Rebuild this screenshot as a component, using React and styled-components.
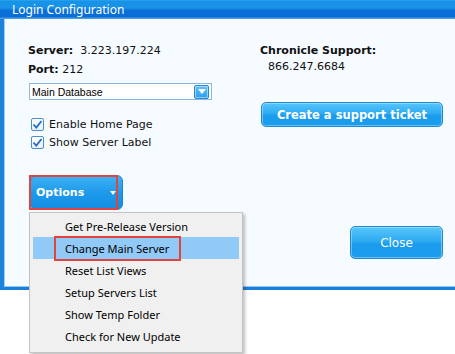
import styled, { createGlobalStyle } from 'styled-components'

const GlobalStyle = createGlobalStyle`
  html, body {
    margin: 0;
    padding: 0;
    height: 100%;
    background: #ffffff;
    overflow: hidden;
  }
  * { box-sizing: border-box; }
`

const Window = styled.div`
  position: relative;
  width: 100%;
  font-family: "DejaVu Sans", Verdana, sans-serif;
  font-size: 11px;
  color: #111;
`
const TitleBar = styled.div`
  height: 19px;
  padding-left: 12px;
  display: flex;
  align-items: center;
  color: #fff;
  font-family: "Noto Sans", "Open Sans", sans-serif;
  font-size: 12px;
  background: linear-gradient(to bottom, #3aa6ec 0px, #1694e7 1px, #1a92e6 8px, #0a70d9 10px, #0a6dd6 17px, #4b9ee6 18px);
`
const Frame = styled.div`
  height: 271px;
  border-left: 4px solid #1c82dc;
  border-bottom: 3px solid #1c7fd8;
  box-shadow: inset 1px 0 0 #9cd0f6, inset 0 -1px 0 #8fc8f3;
  background: #f6fbff;
  display: grid;
  grid-template-columns: 232px 183px;
  padding: 24px 0 28px 24px;
`
const Column = styled.div`
  display: flex;
  flex-direction: column;
`
const Line = styled.div`
  line-height: ${p => p.$lh || 15}px;
  margin-bottom: ${p => p.$mb || 0}px;
  padding-left: ${p => p.$indent || 0}px;
  white-space: nowrap;
`
const Label = styled.b`
  font-weight: bold;
  margin-right: ${p => p.$gap || 0}px;
`
const Select = styled.div`
  width: 183px;
  height: 17px;
  margin: 6px 0 0 1px;
  background: #fff;
  border: 1px solid #8ab6df;
  display: flex;
  align-items: center;
  justify-content: space-between;
  padding: 0 2px 0 2px;
  font-family: "Liberation Sans", Arial, sans-serif;
  font-size: 10.5px;
  color: #000;
`
const SelectArrow = styled.div`
  width: 15px;
  height: 14px;
  border-radius: 2px;
  border: 1px solid #2a86d6;
  background: linear-gradient(to bottom, #5fc1f8, #2aa0ee);
  display: flex;
  align-items: center;
  justify-content: center;
  box-shadow: inset 0 0 0 1px rgba(255,255,255,0.45);
`
const Checks = styled.div`
  margin-top: 15px;
  display: flex;
  flex-direction: column;
`
const CheckRow = styled.div`
  height: 18px;
  display: flex;
  align-items: center;
  gap: 5px;
  padding-left: 3px;
`
const Box = styled.span`
  width: 13px;
  height: 13px;
  border: 1px solid #4b8fd1;
  border-radius: 2px;
  background: linear-gradient(to bottom, #ffffff, #e6f1fb);
  display: flex;
  align-items: center;
  justify-content: center;
`
const OptionsButton = styled.div`
  position: relative;
  margin: 24px 0 0 2px;
  width: 93px;
  height: 35px;
  border: 1px solid #1f82d2;
  border-radius: 6px;
  background: linear-gradient(to bottom, #3cb2f5, #1c98ea 55%, #138fe2);
  color: #fff;
  font-weight: bold;
  display: flex;
  align-items: center;
  justify-content: space-between;
  padding: 0 6px 0 5px;
`
const Caret = styled.span`
  width: 0;
  height: 0;
  border-left: 3px solid transparent;
  border-right: 3px solid transparent;
  border-top: 4px solid #fff;
`
const Callout = styled.span`
  position: absolute;
  top: ${p => p.$top}px;
  left: ${p => p.$left}px;
  width: ${p => p.$w}px;
  height: ${p => p.$h}px;
  border: 2px solid #e2433d;
  pointer-events: none;
`
const BlueButton = styled.div`
  height: ${p => p.$h}px;
  width: ${p => p.$w}px;
  margin-left: ${p => p.$ml || 0}px;
  margin-top: ${p => p.$mt};
  align-self: ${p => p.$align || 'auto'};
  border: 1px solid #1d8ad6;
  border-radius: 5px;
  background: linear-gradient(to bottom, #58c6fb 0%, #2eabf2 45%, #1a9bec 55%, #1b9cec 100%);
  box-shadow: inset 0 0 0 1px rgba(255,255,255,0.35);
  color: #fff;
  display: flex;
  align-items: center;
  justify-content: center;
  font-size: ${p => p.$fs || 12}px;
  font-weight: ${p => (p.$bold ? 'bold' : 'normal')};
`
const Menu = styled.div`
  position: absolute;
  left: 29px;
  top: 212px;
  width: 214px;
  padding: 2px 3px 5px 3px;
  background: #f0f0f0;
  border: 1px solid #c4c4c4;
  box-shadow: 2px 2px 3px rgba(0,0,0,0.25);
  font-family: "Noto Sans", "Open Sans", sans-serif;
  font-size: 11px;
  color: #000;
`
const MenuItem = styled.div`
  position: relative;
  height: 22px;
  display: flex;
  align-items: center;
  padding-left: 32px;
  background: ${p => (p.$active ? '#91c9f7' : 'transparent')};
`

const Check = () => (
  <svg width="11" height="11" viewBox="0 0 11 11">
    <path d="M1.5 5.5 L4.3 8.5 L9.5 2" fill="none" stroke="#1f6fc4" strokeWidth="1.8" />
  </svg>
)

const DownArrow = () => (
  <svg width="8" height="5" viewBox="0 0 8 5">
    <path d="M0 0 H8 L4 5 Z" fill="#fff" />
  </svg>
)

const menuItems = [
  'Get Pre-Release Version',
  'Change Main Server',
  'Reset List Views',
  'Setup Servers List',
  'Show Temp Folder',
  'Check for New Update',
]

export default function App() {
  return (
    <>
      <GlobalStyle />
      <Window>
        <TitleBar>Login Configuration</TitleBar>
        <Frame>
          <Column>
            <Line $mb={4}><Label $gap={7}>Server:</Label>3.223.197.224</Line>
            <Line><Label>Port:</Label> 212</Line>
            <Select>
              <span>Main Database</span>
              <SelectArrow><DownArrow /></SelectArrow>
            </Select>
            <Checks>
              <CheckRow><Box><Check /></Box>Enable Home Page</CheckRow>
              <CheckRow><Box><Check /></Box>Show Server Label</CheckRow>
            </Checks>
            <OptionsButton>
              Options
              <Caret />
              <Callout $top={-1} $left={-2} $w={89} $h={35} />
            </OptionsButton>
          </Column>
          <Column>
            <Line $lh={16}><Label>Chronicle Support:</Label></Line>
            <Line $lh={16} $indent={8}>866.247.6684</Line>
            <BlueButton $h={25} $w={182} $ml={1} $mt="27px" $bold $fs={11.5}>
              Create a support ticket
            </BlueButton>
            <BlueButton $h={33} $w={93} $mt="auto" $align="flex-end">
              Close
            </BlueButton>
          </Column>
        </Frame>
        <Menu>
          {menuItems.map((item, i) => (
            <MenuItem key={item} $active={i === 1}>
              {item}
              {i === 1 && <Callout $top={-1} $left={21} $w={127} $h={25} />}
            </MenuItem>
          ))}
        </Menu>
      </Window>
    </>
  )
}
